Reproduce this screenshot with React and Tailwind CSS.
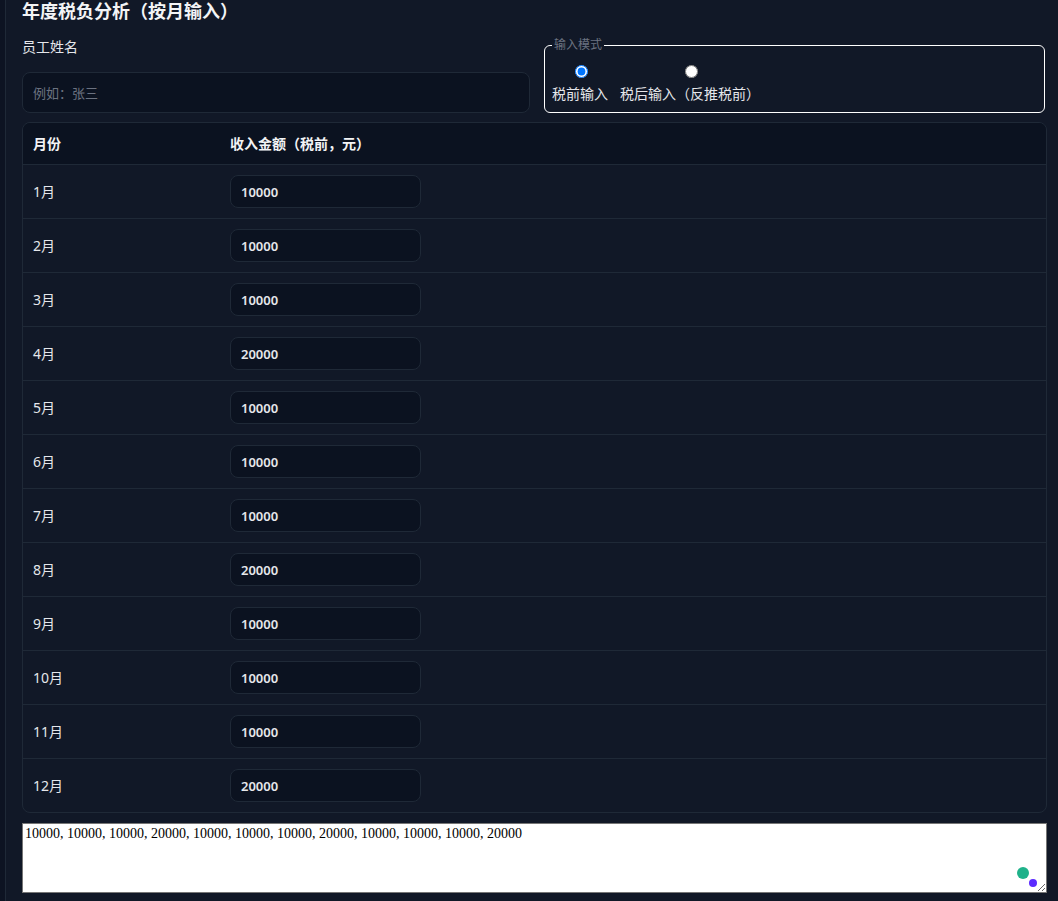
import { useState } from "react";

const months = [10000, 10000, 10000, 20000, 10000, 10000, 10000, 20000, 10000, 10000, 10000, 20000];

function App() {
  const [values, setValues] = useState(months.map(String));
  const [mode, setMode] = useState("pre");

  const update = (i, v) => {
    const next = [...values];
    next[i] = v;
    setValues(next);
  };

  return (
    <div className="min-h-screen bg-[#111827] flex font-['Noto_Sans','Noto_Sans_CJK_SC',sans-serif] text-[#e5e7eb]">
      <div className="w-[6px] shrink-0 bg-[#0d1322] border-r border-[#1f2937]" />

      <div className="flex-1 pl-[16px] pr-[11px]">
        <h2 className="text-[18px] leading-[22px] font-bold text-[#f3f4f6]">
          年度税负分析（按月输入）
        </h2>

        <div className="grid grid-cols-[1fr_503px] gap-[14px] mt-[15px]">
          <div>
            <label className="block text-[14px] leading-[20px]">员工姓名</label>
            <input
              placeholder="例如：张三"
              className="mt-[15px] w-full h-[41px] rounded-[8px] border border-[#1f2937] bg-[#0b1220] px-[10px] text-[13px] text-[#e5e7eb] placeholder:text-[#6b7280] outline-none"
            />
          </div>

          <fieldset className="border border-white rounded-[6px] pl-[7px] pr-[7px] pb-[8px] pt-[11px] mr-[2px]">
            <legend className="px-[2px] text-[12px] leading-[16px] text-[#6b7280]">输入模式</legend>
            <div className="flex gap-[12px]">
              <label className="flex flex-col items-center gap-[6px] text-[14px] leading-[20px]">
                <input
                  type="radio"
                  name="mode"
                  checked={mode === "pre"}
                  onChange={() => setMode("pre")}
                  className="m-0 mt-[1px] ml-[3px] w-[13px] h-[13px]"
                />
                税前输入
              </label>
              <label className="flex flex-col items-center gap-[6px] text-[14px] leading-[20px]">
                <input
                  type="radio"
                  name="mode"
                  checked={mode === "post"}
                  onChange={() => setMode("post")}
                  className="m-0 mt-[1px] ml-[3px] w-[13px] h-[13px]"
                />
                税后输入（反推税前）
              </label>
            </div>
          </fieldset>
        </div>

        <div className="mt-[9px] rounded-[8px] border border-[#1f2937] overflow-hidden">
          <div className="grid grid-cols-[198px_1fr] h-[41px] items-center bg-[#0b1220] text-[14px] font-bold text-[#f3f4f6]">
            <div className="pl-[10px]">月份</div>
            <div className="pl-[9px]">收入金额（税前，元）</div>
          </div>
          {values.map((v, i) => (
            <div
              key={i}
              className="grid grid-cols-[198px_1fr] h-[54px] items-center border-t border-[#1f2937] text-[14px]"
            >
              <div className="pl-[10px]">{i + 1}月</div>
              <div className="pl-[9px]">
                <input
                  value={v}
                  onChange={(e) => update(i, e.target.value)}
                  className="w-[191px] h-[33px] rounded-[8px] border border-[#1f2937] bg-[#0b1220] px-[10px] text-[13px] font-semibold text-[#e5e7eb] outline-none"
                />
              </div>
            </div>
          ))}
        </div>

        <div className="relative mt-[10px]">
          <textarea
            readOnly
            value={values.join(", ")}
            className="block w-full h-[70px] bg-white border border-[#767676] px-[2px] py-[1px] text-[14px] leading-[17px] text-black font-['Liberation_Serif',serif]"
          />
          <span className="absolute right-[18px] bottom-[14px] w-[12px] h-[12px] rounded-full bg-[#1fb28a]" />
          <span className="absolute right-[10px] bottom-[6px] w-[8px] h-[8px] rounded-full bg-[#5b2bff]" />
        </div>
      </div>
    </div>
  );
}

export default App;
